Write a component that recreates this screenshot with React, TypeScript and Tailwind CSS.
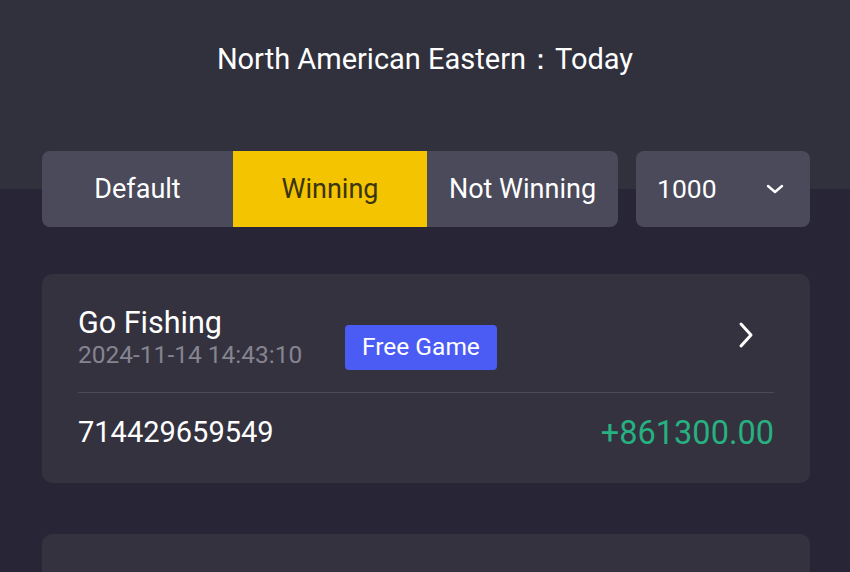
import React from "react";

function ChevronDown() {
  return (
    <svg width="20" height="12" viewBox="0 0 20 12" fill="none">
      <path d="M3 3l7 6 7-6" stroke="#fff" strokeWidth="2.4" strokeLinecap="round" strokeLinejoin="round" />
    </svg>
  );
}

function ChevronRight() {
  return (
    <svg width="16" height="28" viewBox="0 0 16 28" fill="none">
      <path d="M3 3l10 11-10 11" stroke="#fff" strokeWidth="3" strokeLinecap="round" strokeLinejoin="round" />
    </svg>
  );
}

export default function App() {
  return (
    <div className="w-[850px] h-[572px] overflow-hidden bg-[#282636] text-white" style={{ fontFamily: "Roboto, 'Noto Sans', sans-serif" }}>
      <div className="h-[189px] bg-[#31303d] flex flex-col">
        <div className="h-[120px] flex items-center justify-center text-[29px] text-white">
          North American Eastern：Today
        </div>
      </div>
      <div className="pl-[42px] pr-[40px] -mt-[38px] flex gap-[18px]">
        <div className="flex w-[576px] h-[76px] rounded-[8px] overflow-hidden bg-[#4a4a5a] text-[27px]">
          <div className="w-[191px] flex items-center justify-center">Default</div>
          <div className="w-[194px] flex items-center justify-center bg-[#f5c400] text-[#3a3410]">Winning</div>
          <div className="flex-1 flex items-center justify-center">Not Winning</div>
        </div>
        <div className="flex-1 h-[76px] rounded-[8px] bg-[#4a4a5a] flex items-center justify-between pl-[21px] pr-[25px] text-[26.5px]">
          <span>1000</span>
          <ChevronDown />
        </div>
      </div>
      <div className="pl-[42px] pr-[40px] mt-[47px] flex flex-col gap-[51px]">
        <div className="h-[209px] rounded-[10px] bg-[#34323f] px-[36px] flex flex-col">
          <div className="flex items-center h-[118px] pt-[4px]">
            <div className="flex flex-col w-[267px] mt-[6px]">
              <span className="text-[30.5px] leading-[34px]">Go Fishing</span>
              <span className="text-[24.5px] leading-[30px] text-[#85848f]">2024-11-14 14:43:10</span>
            </div>
            <div className="h-[45px] px-[17px] rounded-[4px] bg-[#4b5cf5] flex items-center text-[24.5px] mt-[25px]">Free Game</div>
            <div className="ml-auto mr-[20px] flex items-center">
              <ChevronRight />
            </div>
          </div>
          <div className="h-px bg-[#4c4b5a]" />
          <div className="flex items-center justify-between h-[82px] pb-[2px]">
            <span className="text-[29px]">714429659549</span>
            <span className="text-[32.5px] text-[#27b080]">+861300.00</span>
          </div>
        </div>
        <div className="h-[120px] rounded-[10px] bg-[#34323f]" />
      </div>
    </div>
  );
}
